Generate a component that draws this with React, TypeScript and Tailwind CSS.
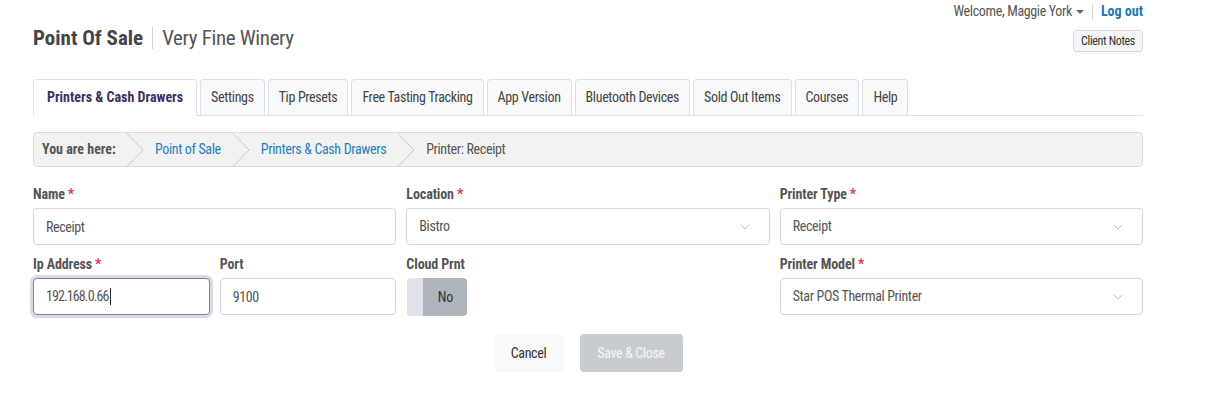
import { ChevronDown } from 'lucide-react';

const tabs = [
  'Printers & Cash Drawers',
  'Settings',
  'Tip Presets',
  'Free Tasting Tracking',
  'App Version',
  'Bluetooth Devices',
  'Sold Out Items',
  'Courses',
  'Help',
];

const Crumb = () => (
  <svg width="18" height="34" viewBox="0 0 18 34" className="shrink-0 text-[#c9c9c9]">
    <polyline points="0.5,0 17,17 0.5,34" fill="none" stroke="currentColor" strokeWidth="1" />
  </svg>
);

const Label = ({ text, required }: { text: string; required?: boolean }) => (
  <label className="block mb-[4px] text-[14px] leading-[20px] font-bold tracking-[-0.1px] text-[#555]">
    {text}
    {required && <span className="ml-[3px] text-[#e0384b]">*</span>}
  </label>
);

const TextInput = ({ value }: { value: string }) => (
  <input
    readOnly
    value={value}
    className="w-full h-[37px] px-[12px] rounded-[4px] border border-[#d5d8dc] bg-white text-[14px] tracking-[-0.4px] text-[#555] outline-none"
  />
);

const Select = ({ value }: { value: string }) => (
  <div className="w-full h-[37px] pl-[12px] pr-[16px] rounded-[4px] border border-[#d5d8dc] bg-white flex items-center justify-between text-[14px] text-[#555]">
    <span>{value}</span>
    <ChevronDown size={16} strokeWidth={1} className="text-[#9aa0a6]" />
  </div>
);

export default function App() {
  return (
    <div className="min-h-screen bg-white font-['Roboto_Condensed',Roboto,sans-serif] tracking-[-0.35px] text-[#555]">
      <div className="ml-[33px] w-[1110px]">
        <div className="flex justify-between">
          <div className="pt-[23px] flex items-center">
            <span className="text-[21px] leading-[28px] font-bold tracking-normal text-[#444]">Point Of Sale</span>
            <span className="mx-[9px] w-px h-[22px] bg-[#d3d3d3]" />
            <span className="text-[21px] leading-[28px] text-[#555]">Very Fine Winery</span>
          </div>
          <div className="flex flex-col items-end">
            <div className="pt-[1px] h-[22px] flex items-center text-[14px]">
              <span className="text-[#555]">Welcome, Maggie York</span>
              <span className="ml-[4px] w-0 h-0 border-l-[4px] border-r-[4px] border-t-[4px] border-l-transparent border-r-transparent border-t-[#666]" />
              <span className="mx-[8px] w-px h-[16px] bg-[#d6d6d6]" />
              <a className="font-bold tracking-normal text-[#1b78b6]">Log out</a>
            </div>
            <button className="mt-[8px] h-[22px] px-[7px] rounded-[3px] border border-[#d9dcdf] bg-[#f5f6f7] text-[12px] text-[#333]">
              Client Notes
            </button>
          </div>
        </div>

        <div className="mt-[27px] flex gap-[3px] border-b border-[#dee2e6]">
          {tabs.map((tab, i) => (
            <div
              key={tab}
              className={
                i === 0
                  ? 'h-[37px] -mb-px px-[13px] flex items-center rounded-t-[4px] border border-[#dee2e6] border-b-white bg-white text-[14px] font-bold tracking-normal text-[#3a3163]'
                  : 'h-[36px] px-[10px] flex items-center rounded-t-[4px] border border-b-0 border-[#dee2e6] bg-[#f8f9fa] text-[14px] text-[#444]'
              }
            >
              {tab}
            </div>
          ))}
        </div>

        <div className="mt-[16px] h-[35px] flex items-center rounded-[4px] border border-[#dcdcdc] bg-[#f2f2f2] text-[14px]">
          <span className="pl-[8px] pr-[10px] font-bold tracking-normal text-[#555]">You are here:</span>
          <Crumb />
          <a className="px-[11px] text-[#1d80bf]">Point of Sale</a>
          <Crumb />
          <a className="px-[11px] text-[#1d80bf]">Printers &amp; Cash Drawers</a>
          <Crumb />
          <span className="px-[11px] text-[#555]">Printer: Receipt</span>
        </div>

        <div className="mt-[17px] grid grid-cols-3 gap-x-[10px] gap-y-[9px]">
          <div>
            <Label text="Name" required />
            <TextInput value="Receipt" />
          </div>
          <div>
            <Label text="Location" required />
            <Select value="Bistro" />
          </div>
          <div>
            <Label text="Printer Type" required />
            <Select value="Receipt" />
          </div>

          <div className="grid grid-cols-2 gap-x-[10px]">
            <div>
              <Label text="Ip Address" required />
              <div className="h-[37px] px-[12px] rounded-[4px] border border-[#8a78bd] bg-white flex items-center text-[14px] tracking-[-0.9px] text-[#555] shadow-[0_0_0_3px_#dcd9e3]">
                192.168.0.66
                <span className="ml-[2px] w-px h-[17px] bg-[#222]" />
              </div>
            </div>
            <div>
              <Label text="Port" />
              <TextInput value="9100" />
            </div>
          </div>
          <div>
            <Label text="Cloud Prnt" />
            <div className="ml-px flex w-[60px] h-[38px] rounded-[4px] overflow-hidden">
              <div className="w-[16px] bg-[#dfe2e6]" />
              <div className="flex-1 bg-[#adb4bb] flex items-center justify-center text-[14px] text-[#333]">No</div>
            </div>
          </div>
          <div>
            <Label text="Printer Model" required />
            <Select value="Star POS Thermal Printer" />
          </div>
        </div>

        <div className="mt-[18px] flex justify-center gap-[16px]">
          <button className="w-[70px] h-[38px] rounded-[4px] bg-[#f8f9fa] text-[14px] text-[#333]">Cancel</button>
          <button className="w-[103px] h-[38px] rounded-[4px] bg-[#c8cccf] text-[14px] text-[#f4f5f6]">Save &amp; Close</button>
        </div>
      </div>
    </div>
  );
}
